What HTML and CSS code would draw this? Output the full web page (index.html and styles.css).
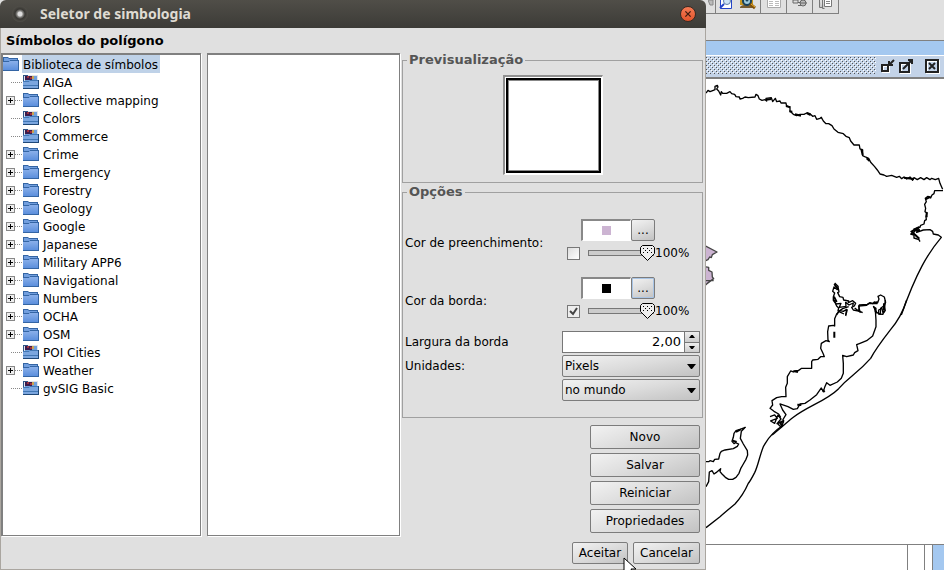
FILE: index.html
```html
<!DOCTYPE html>
<html lang="pt">
<head>
<meta charset="utf-8">
<title>Seletor de simbologia</title>
<link rel="stylesheet" href="styles.css">
</head>
<body>
<svg class="defs" aria-hidden="true">
  <defs>
    <linearGradient id="folder-front" x1="0" y1="0" x2="0" y2="1"><stop offset="0" stop-color="#90b4ec"/><stop offset="1" stop-color="#5c8fdc"/></linearGradient>
    <symbol id="folder" viewBox="0 0 16 16">
      <path d="M0 1h5l1 1h9v4H0z" fill="#3465a4"/>
      <path d="M1 2h4l1 1h8v2H1z" fill="#729fdf"/>
      <path d="M0 5h6l1-1h9v10H0z" fill="url(#folder-front)"/>
      <path d="M0 5.5h6l1-1h9" fill="none" stroke="#3465a4"/>
      <path d="M0 14.5h16M15.5 5v9" fill="none" stroke="#3465a4"/>
    </symbol>
    <symbol id="library" viewBox="0 0 16 16">
      <path d="M0 1h15v8H0z" fill="#dfe3ea"/>
      <path d="M0 1h5v1H1v6H0z" fill="#2f5585"/>
      <path d="M2 2h12v5H2z" fill="#6fa0dc"/>
      <path d="M2 2h7v4H2z" fill="#3b1b4c"/>
      <path d="M4 2h2v2H4zM7 3h2v2H7z" fill="#9c2f3c"/>
      <path d="M9 2h2v3H9z" fill="#c9a352"/>
      <path d="M0 7h6l1-1h9v8H0z" fill="#7ba6df"/>
      <path d="M0 7.5h6l1-1h9M0 11.5h16" fill="none" stroke="#4277b4"/>
      <path d="M0 14.5h16M15.5 6v8" fill="none" stroke="#1f4878"/>
    </symbol>
  </defs>
</svg>

<div class="desktop">
  <section class="dialog" aria-label="Seletor de simbologia">
    <header class="titlebar">
      <span class="app-dot"></span>
      <h1>Seletor de simbologia</h1>
      <button class="close" type="button" aria-label="Fechar"><svg viewBox="0 0 16 16"><path d="M5 5l6 6M11 5l-6 6"/></svg></button>
    </header>
    <div class="dialog-body">
      <h2>Símbolos do polígono</h2>
      <div class="columns">
        <div class="pane">
          <div class="root"><svg class="icon"><use href="#folder"/></svg><span>Biblioteca de símbolos</span></div>
          <ul class="tree">
            <li class="leaf"><svg class="icon"><use href="#library"/></svg><span>AIGA</span></li>
            <li><button type="button" aria-label="Expandir"></button><svg class="icon"><use href="#folder"/></svg><span>Collective mapping</span></li>
            <li class="leaf"><svg class="icon"><use href="#library"/></svg><span>Colors</span></li>
            <li class="leaf"><svg class="icon"><use href="#library"/></svg><span>Commerce</span></li>
            <li><button type="button" aria-label="Expandir"></button><svg class="icon"><use href="#folder"/></svg><span>Crime</span></li>
            <li><button type="button" aria-label="Expandir"></button><svg class="icon"><use href="#folder"/></svg><span>Emergency</span></li>
            <li><button type="button" aria-label="Expandir"></button><svg class="icon"><use href="#folder"/></svg><span>Forestry</span></li>
            <li><button type="button" aria-label="Expandir"></button><svg class="icon"><use href="#folder"/></svg><span>Geology</span></li>
            <li><button type="button" aria-label="Expandir"></button><svg class="icon"><use href="#folder"/></svg><span>Google</span></li>
            <li><button type="button" aria-label="Expandir"></button><svg class="icon"><use href="#folder"/></svg><span>Japanese</span></li>
            <li><button type="button" aria-label="Expandir"></button><svg class="icon"><use href="#folder"/></svg><span>Military APP6</span></li>
            <li><button type="button" aria-label="Expandir"></button><svg class="icon"><use href="#folder"/></svg><span>Navigational</span></li>
            <li><button type="button" aria-label="Expandir"></button><svg class="icon"><use href="#folder"/></svg><span>Numbers</span></li>
            <li><button type="button" aria-label="Expandir"></button><svg class="icon"><use href="#folder"/></svg><span>OCHA</span></li>
            <li><button type="button" aria-label="Expandir"></button><svg class="icon"><use href="#folder"/></svg><span>OSM</span></li>
            <li class="leaf"><svg class="icon"><use href="#library"/></svg><span>POI Cities</span></li>
            <li><button type="button" aria-label="Expandir"></button><svg class="icon"><use href="#folder"/></svg><span>Weather</span></li>
            <li class="leaf"><svg class="icon"><use href="#library"/></svg><span>gvSIG Basic</span></li>
          </ul>
        </div>
        <div class="pane"></div>
        <form class="settings">
          <fieldset class="preview">
            <legend>Previsualização</legend>
            <div class="sunken"><div class="symbol"></div></div>
          </fieldset>
          <fieldset class="options">
            <legend>Opções</legend>
            <div class="color-row">
              <label class="name" for="fill-on">Cor de preenchimento:</label>
              <div class="color">
                <div class="pick"><span class="swatch"><i class="fill"></i></span><button class="btn more" type="button" aria-label="Escolher cor de preenchimento">...</button></div>
                <div class="alpha"><input id="fill-on" type="checkbox"><input id="fill-a" type="range" value="100" aria-label="Opacidade"><label for="fill-a">100%</label></div>
              </div>
            </div>
            <div class="color-row">
              <label class="name" for="line-on">Cor da borda:</label>
              <div class="color">
                <div class="pick"><span class="swatch"><i class="line"></i></span><button class="btn more focus" type="button" aria-label="Escolher cor da borda">...</button></div>
                <div class="alpha"><input id="line-on" type="checkbox" checked><input id="line-a" type="range" value="100" aria-label="Opacidade"><label for="line-a">100%</label></div>
              </div>
            </div>
            <div class="fields">
              <label for="width">Largura da borda</label>
              <div class="spinner"><input id="width" type="text" value="2,00"><div class="steps"><button type="button" aria-label="Aumentar"><svg viewBox="0 0 8 4"><path d="M0 4l3-4h2l3 4z"/></svg></button><button type="button" aria-label="Diminuir"><svg viewBox="0 0 8 4"><path d="M0 0l3 4h2l3-4z"/></svg></button></div></div>
              <label for="units">Unidades:</label>
              <select id="units"><option>Pixels</option></select>
              <select class="second" aria-label="Sistema de referência"><option>no mundo</option></select>
            </div>
          </fieldset>
          <div class="actions">
            <button class="btn" type="button">Novo</button>
            <button class="btn" type="button">Salvar</button>
            <button class="btn" type="button">Reiniciar</button>
            <button class="btn" type="button">Propriedades</button>
          </div>
        </form>
      </div>
      <footer>
        <span class="accept"><button class="btn" type="button">Aceitar</button><svg class="cursor" viewBox="0 0 14 20" aria-hidden="true"><path d="M1 1v16l4-4 3 6 3-1-3-6h5z"/></svg></span>
        <button class="btn" type="button">Cancelar</button>
      </footer>
    </div>
  </section>

  <main class="app">
    <div class="tools">
      <button type="button" aria-label="Ferramenta"><svg width="6" height="14" viewBox="0 0 6 14"><path d="M0 0h5v5H2z" fill="#bbb" stroke="#888"/></svg></button>
      <div class="pair">
        <button type="button" aria-label="Zoom na página"><svg width="14" height="14" viewBox="0 0 14 14"><path d="M1.500 0v8.500h11V0" fill="#fff" stroke="#2545c8"/><circle cx="8" cy="1" r="3.500" fill="#cfe4f6" stroke="#5f7fa8"/><path d="M5 4L1 8" stroke="#2545c8" stroke-width="2"/></svg></button>
        <button type="button" aria-label="Localizar"><svg width="17" height="14" viewBox="0 0 17 14"><path d="M0 0h13v5H0z" fill="#c8961e"/><path d="M0 7c2-3 10-3 13 0v1H0z" fill="#775d32"/><circle cx="7" cy="1" r="4" fill="#9fcbdc" stroke="#18415c" stroke-width="2"/><circle cx="7" cy="0" r="1.500" fill="#18415c"/><path d="M10 4l5 4" stroke="#80500c" stroke-width="3"/><path d="M11 4l4 3" stroke="#eeb528"/></svg></button>
      </div>
      <button type="button" aria-label="Tabela"><svg width="16" height="14" viewBox="0 0 16 14"><path d="M1.500 0v7.500h13V0" fill="#fff" stroke="#aaa"/><path d="M3 1.500h4M9 1.500h4M3 3.500h4M9 3.500h4M3 5.500h4M9 5.500h4" stroke="#bbb"/></svg></button>
      <button type="button" aria-label="Ligação"><svg width="16" height="14" viewBox="0 0 16 14"><path d="M1 0h5v3H1zM6 2.500h3M10 0v1M6 5.500h4" fill="#ddd" stroke="#666"/><circle cx="11" cy="3" r="3" fill="#bbb" stroke="#666"/><path d="M8 3h7" stroke="#666"/></svg></button>
      <button type="button" aria-label="Copiar"><svg width="16" height="14" viewBox="0 0 16 14"><path d="M1.500 0v7.500h3M4.500 0v8.500h2" fill="#ccc" stroke="#777"/><path d="M6.500-1h7v7.500h-7z" fill="#fff" stroke="#777"/><path d="M8 1.500h4M8 3.500h4" stroke="#888"/></svg></button>
    </div>
    <div class="view">
      <div class="view-title">
        <span class="bumps"></span>
        <button type="button" aria-label="Minimizar"><svg viewBox="0 0 16 16"><path d="M3 8h6v6H3z" class="hi"/><path d="M2 7h6v6H2z"/><path d="M14 2L9 7M9 3v4h4"/></svg></button>
        <button type="button" aria-label="Maximizar"><svg viewBox="0 0 16 16"><path d="M3 6h9v9H3z" class="hi"/><path d="M2 5h9v9H2z"/><path d="M5 11l9-9M10 2h4v4"/></svg></button>
        <button class="last" type="button" aria-label="Fechar vista"><svg viewBox="0 0 16 16"><path d="M3 3h12v12H3z" class="hi"/><path d="M2 2h12v12H2z"/><path d="M5 5l6 6M11 5l-6 6"/></svg></button>
      </div>
      <div class="map">
        <svg viewBox="706 79 238 465" preserveAspectRatio="xMinYMin slice" role="img" aria-label="Mapa">
          <g transform="translate(700 75) scale(.3333)">
            <path d="M18 54L24 46 30 50 40 46 45 44 45 34 52 31 54 36 50 42 56 48 62 60 64 50 68 55 80 55 90 50 95 56 104 58 108 65 118 66 120 72 128 70 135 66 145 68 165 66 168 58 174 62 178 72 186 76 195 74 200 78 198 70 214 68 218 80 226 70 230 80 240 78 243 84 258 84 260 95 270 95 270 108 280 118 290 122 300 118 312 118 320 114 330 116 338 124 345 122 350 133 360 130 364 127 370 138 378 146 386 146 396 152 402 162 414 172 430 176 438 184 448 188 452 198 462 210 478 210 480 222 488 225 488 242 496 246 506 250 512 262 524 275 532 285 540 297 552 300 560 304 575 301 590 307 598 304 605 311 612 306 620 312 630 306 638 316 642 308 652 314 662 308 672 314 680 308 690 314 695 310 706 314 716 310 720 325 728 343"/>
            <path d="M258 92l12 5M268 109l9 1M285 118l18 4M320 114l12 6M484 222l4 18M500 250l9 8M612 308l30 4M198 74l16 -2" class="thick"/>
          </g>
          <g transform="translate(700 190) scale(.3333)">
            <path d="M729 2l-25 0-2 9-6 4-4 9-8-5-8 6 3 10-5 8 3 12-2 10 6 4-3 10 1 10-5 3-2 10-10 4-2 6-14 5-4 10-10 5 10 3 0 9 15 5 3 6M640 118l17-7-7 16 20-7 20-1 8 5 2 8 15 3 9 7C685 188 650 245 604 375"/>
            <path d="M692 20l-16 8M680 66v16M632 126l25-15M634 124l24 22M640 122l20-2" class="thick"/>
            <path d="M404 279l10 10-2 10-10-8-4 13 6 5-4 12 0 10 6 8 4 9 6 6-2 9 8 4 10 5M414 290l3 16-4 2 6 12 10 2 2 8 15 3-1 5 13-6 9 8-4 8-8 4 5 8 20 4 8 4M484 367l-8-4 2-18 24-2 8-5 8 3 5-5 10 2 4-11-3-8 8-4 11 6 4 16-5 10 4 14-5 8M446 350l-18 6-12 8-6 11M520 350l8 5-2 10 15 8 1-18 8-6"/>
            <path d="M403 282l8 12M402 320l8 16M524 354l6 16M552 340v20" class="thick"/>
            <path class="shape" d="M14 167l37 19-14 8-3 9-5-2-5 8-10 4M14 230l12 2 0 9 10 5 1 15 4 5-20 15-7 6zM18 272h23"/>
          </g>
          <g transform="translate(700 300) scale(.3333)">
            <path d="M620 0Q604 52 570 91Q528 145 512 175C468 225 450 226 416 266C380 302 320 320 280 352C260 368 230 394 216 405"/>
            <path d="M403 0L408 12 423 10 418 22 438 19 437 7 447 15 460 9 458 20M437 45L440 28 430 34 420 32 410 42 404 56 404 78 400 76 386 78 383 95 384 120 388 125 378 122 364 130 362 145 370 162 373 170 362 170 354 178 338 180 335 185 335 205 305 205 295 212 288 212 280 216 272 213 262 230 262 250 257 262 258 290 245 290 230 293 216 302 218 315 210 325 222 334 236 342 242 352"/>
            <path d="M442 28l-5 20M464 24l16 12-4-18 24-2 6-5 10-1 15 1 0-7M520 18L526 30 528 60 528 80 518 108 500 122 480 130 470 134 474 152 464 158 460 165 440 170 428 166 430 190 430 220 424 235 412 246 390 256 380 248 374 262 370 275 364 264 350 284 330 300 315 310 300 312 292 326 280 328 264 320 240 312 248 330 258 344 248 360M556 0l-2 25-5 18-13-1 0-12 10-5 4 18"/>
            <path d="M210 350l14-5 8 10-20 8 12 7 10-25 9 12-12 14 20-6-8 16-10-10 18-10-5 18"/>
            <path d="M403 95v18M280 213l14 3M368 270l6 6M292 314l12 1M240 366l6 12" class="thick"/>
          </g>
          <g transform="translate(700 420) scale(.3333)">
            <path d="M250 15C204 46 200 65 190 80C178 110 175 135 164 158Q150 185 145 190Q130 225 105 252Q75 277 60 290L18 323"/>
            <path d="M18 125L26 125 30 122 40 125 44 118 56 117 60 100 64 94 75 90 100 86 112 79 116 72 106 68 102 71 96 64 100 52 102 40 108 32 120 28 136 22 124 34 121 55 130 72 142 92 143 105 138 118 130 132 122 146 117 160 108 172 98 178 86 178 76 172 66 162 60 155 62 146 48 158 42 162 36 152 28 156 26 185 18 200"/>
            <path d="M98 62l12 4M108 36l14-8" class="thick"/>
          </g>
        </svg>
      </div>
      <div class="status"><span></span><span></span><span></span><span></span></div>
    </div>
  </main>
</div>
</body>
</html>
```

FILE: styles.css
```css
* { box-sizing: border-box; }
body {
  margin: 0;
  background: #e0e0e0;
  color: #000;
  font: 12px/18px "DejaVu Sans", sans-serif;
  overflow: hidden;
}
button, input, select { font: inherit; color: inherit; margin: 0; }
button { padding: 0; }
h1, h2, ul { margin: 0; padding: 0; }
.defs { position: absolute; width: 0; height: 0; }
.desktop {
  display: grid;
  grid-template-columns: minmax(0, 706fr) minmax(0, 238fr);
  min-height: 100vh;
}

/* Dialog */
.dialog { display: flex; flex-direction: column; }
.titlebar {
  display: flex;
  align-items: center;
  height: 28px;
  padding: 0 10px 0 12px;
  gap: 12px;
  background: linear-gradient(#504e48, #3c3b37);
  border-radius: 6px 6px 0 0;
  color: #dfdbd2;
}
.titlebar h1 { flex: 1; font: bold 14px/20px "Noto Sans", sans-serif; }
.app-dot {
  width: 16px;
  height: 16px;
  border-radius: 50%;
  background: radial-gradient(circle, #ddd 0 2px, #8d8c89 3px, #383733 5px, #504e48 8px);
}
.close {
  width: 16px;
  height: 16px;
  border: 1px solid #3a2a22;
  border-radius: 50%;
  background: linear-gradient(#f47b55, #e2542b);
}
.close svg { display: block; width: 14px; height: 14px; fill: none; stroke: #3c1c10; stroke-width: 1.5; }
.dialog-body {
  flex: 1;
  display: flex;
  flex-direction: column;
  border: 1px solid #aaa6a0;
  border-top: 0;
}
h2 { padding: 4px 5px 3px; font-size: 13px; line-height: 18px; }
.columns {
  flex: 1;
  display: grid;
  grid-template-columns: minmax(0, 200fr) 6px minmax(0, 193fr) 2px minmax(0, 301fr);
  padding-right: 2px;
}
.pane {
  border: solid #808080;
  border-width: 2px 1px 1px 2px;
  box-shadow: 1px 1px #fff;
  background: #fff;
}
.pane + .pane { grid-column: 3; border-left-width: 1px; }
.root, .tree li { display: flex; align-items: center; height: 18px; white-space: nowrap; }
.root span, .tree span { height: 18px; padding-top: 1px; }
.root span { margin-left: 3px; padding-left: 1px; padding-right: 2px; background: #bfd2e8; }
.icon { flex: none; width: 16px; height: 16px; }
.tree { list-style: none; }
.tree li { padding-left: 3px; }
.tree .icon { margin-right: 4px; }
.tree .icon, .tree span { order: 2; }
.tree li::before { content: ""; order: 1; width: 7px; margin-right: 1px; border-top: 1px dotted #888; }
.tree .leaf::before { width: 11px; margin-left: 5px; }
.tree button {
  width: 9px;
  height: 9px;
  border: 1px solid #888;
  background: linear-gradient(#000, #000) center / 5px 1px no-repeat, linear-gradient(#000, #000) center / 1px 5px no-repeat, #eee;
}

/* Symbol settings */
.settings { grid-column: 5; display: flex; flex-direction: column; }
fieldset { min-width: 0; margin: 0; padding: 0; border: 1px solid #a0a0a0; }
legend { margin-left: 4px; padding: 0 2px; color: #555; font-size: 13px; font-weight: bold; line-height: 14px; }
.preview { height: 130px; }
.sunken {
  width: 100px;
  height: 100px;
  margin: 8px auto 0;
  padding: 1px;
  border: solid;
  border-width: 2px 1px 1px 2px;
  border-color: #909090 #fff #fff #909090;
  background: #fff;
}
.symbol { height: 95px; border: 2px solid #000; outline: 1px solid #888; outline-offset: -3px; }
.options { height: 233px; margin-top: 2px; }
.color-row { display: flex; align-items: center; justify-content: space-between; height: 42px; margin: 21px 7px 16px 2px; }
.color-row + .color-row { margin-top: 0; margin-bottom: 11px; }
.name { padding-top: 4px; }
.color { width: 128px; }
.pick { display: flex; padding-left: 14px; }
.swatch {
  display: grid;
  place-items: center;
  width: 50px;
  height: 22px;
  border: solid;
  border-width: 2px 1px 1px 2px;
  border-color: #888 #fff #fff #888;
  background: #fff;
}
.swatch i { width: 9px; height: 9px; }
.fill { background: #ccb4d2; }
.line { background: #000; }
.btn {
  height: 24px;
  border: 1px solid #7c7c7c;
  border-radius: 2px;
  background: linear-gradient(160deg, #f2f2f2, #dcdcdc 50%, #c2c2c2);
}
.more { width: 24px; height: 22px; }
.focus { box-shadow: inset 0 0 0 1px #a9c5e6; }
.alpha { display: flex; align-items: center; height: 20px; margin-top: 2px; }
.alpha input[type="checkbox"] {
  appearance: none;
  width: 13px;
  height: 13px;
  border: 1px solid #777;
  background: linear-gradient(135deg, #ddd, #fff);
}
.alpha input:checked {
  background: url("data:image/svg+xml,%3Csvg xmlns='http://www.w3.org/2000/svg' viewBox='0 0 11 11'%3E%3Cpath d='M2 5l3 3 4-6' fill='none' stroke='%23444' stroke-width='2'/%3E%3C/svg%3E"), #eee;
}
.alpha input[type="range"] { appearance: none; width: 68px; height: 16px; margin-left: 7px; background: none; }
.alpha input::-webkit-slider-runnable-track {
  height: 16px;
  background: linear-gradient(#ccc, #ccc) 2px 6px / 64px 4px no-repeat, linear-gradient(#777, #777) 1px 5px / 66px 6px no-repeat;
}
.alpha input::-webkit-slider-thumb {
  appearance: none;
  width: 15px;
  height: 16px;
  background: url("data:image/svg+xml,%3Csvg xmlns='http://www.w3.org/2000/svg' viewBox='0 0 15 16'%3E%3Cpath d='M2.500 .5h10l2 2v6l-7 7-7-7v-6z' fill='%23eee' stroke='%23000'/%3E%3Cpath d='M3 3h1v1H3zM7 3h1v1H7zM11 3h1v1h-1zM5 5h1v1H5zM9 5h1v1H9zM3 7h1v1H3zM7 7h1v1H7zM11 7h1v1h-1z'/%3E%3C/svg%3E");
}
.fields { display: grid; grid-template-columns: 1fr 138px; row-gap: 2px; margin: 0 2px; align-items: center; }
.fields label { height: 18px; }
.spinner { display: flex; height: 22px; border: 1px solid #777; background: #fff; }
.spinner input { flex: 1; min-width: 0; padding: 0 3px; border: 0; outline: 0; background: none; text-align: right; font-size: 13px; }
.steps { display: flex; flex-direction: column; width: 15px; border-left: 1px solid #777; }
.steps button { flex: 1; display: grid; place-items: center; border: 0; background: linear-gradient(#eee, #ccc); }
.steps button + button { border-top: 1px solid #777; }
.steps svg { width: 6px; height: 3px; }
.fields select {
  appearance: none;
  height: 22px;
  padding: 0 2px;
  border: 1px solid #7c7c7c;
  border-radius: 2px;
  background:
    url("data:image/svg+xml,%3Csvg xmlns='http://www.w3.org/2000/svg' viewBox='0 0 9 5'%3E%3Cpath d='M0 0h9L5 5H4z'/%3E%3C/svg%3E") right 3px center / 9px 5px no-repeat,
    linear-gradient(170deg, #f2f2f2, #dcdcdc 50%, #c2c2c2);
}
.fields .second { grid-column: 2; }
.actions { display: flex; flex-direction: column; gap: 4px; width: 110px; margin: 7px 3px 0 auto; }
footer { display: flex; justify-content: flex-end; gap: 5px; padding: 6px 5px 5px; }
footer .btn { min-width: 67px; height: 22px; }
footer .accept .btn { min-width: 56px; }
.accept { position: relative; }
.cursor { position: absolute; left: 51px; top: 15px; width: 14px; height: 20px; }
.cursor path { fill: #fff; stroke: #000; }

/* Application window */
.app { display: flex; flex-direction: column; background: #e0e0e0; }
.tools { display: flex; height: 14px; margin-bottom: 26px; }
.tools button { display: grid; place-items: start center; border: 0; background: none; }
.tools > * { height: 14px; width: 26px; border: solid #808080 !important; border-width: 0 1px 1px 0 !important; }
.tools > :first-child { width: 10px; }
.tools .pair { display: flex; width: 45px; padding: 0 3px; justify-content: space-between; }
.view { flex: 1; display: flex; flex-direction: column; border-top: 1px solid #808080; }
.view-title {
  display: flex;
  align-items: center;
  height: 38px;
  padding: 15px 4px 2px 0;
  border-bottom: 2px solid #808080;
  background: linear-gradient(#a4c8f0 14px, #fff 14px 15px, #c3d3e8 15px);
}
.bumps {
  flex: 1;
  height: 17px;
  margin-right: 4px;
  background: url("data:image/svg+xml,%3Csvg xmlns='http://www.w3.org/2000/svg' width='4' height='4' shape-rendering='crispEdges'%3E%3Cpath d='M1 1h1v1H1zM3 3h1v1H3z' fill='%23fff'/%3E%3Cpath d='M0 0h1v1H0zM2 2h1v1H2z' fill='%23555'/%3E%3C/svg%3E");
}
.view-title button { width: 16px; height: 16px; margin-right: 2px; border: 0; background: none; }
.view-title .last { margin: 0 0 0 8px; }
.view-title svg { display: block; width: 16px; height: 16px; fill: none; stroke: #222; stroke-width: 2; }
.view-title .hi { stroke: #fff; }
.map { flex: 1; background: #fff; overflow: hidden; }
.map svg { display: block; width: 100%; fill: none; stroke: #000; stroke-width: 4; stroke-linejoin: round; }
.map .thick { stroke-width: 6; }
.map .shape { fill: #ccb4d2; stroke: #444; }
.status { display: grid; grid-template-columns: 1fr 17px 8px 12px; height: 26px; border-top: 1px solid #808080; background: #fff; }
.status span + span { border-left: 1px solid #808080; }
.status span:last-child { background: #a4c8f0; }
```
